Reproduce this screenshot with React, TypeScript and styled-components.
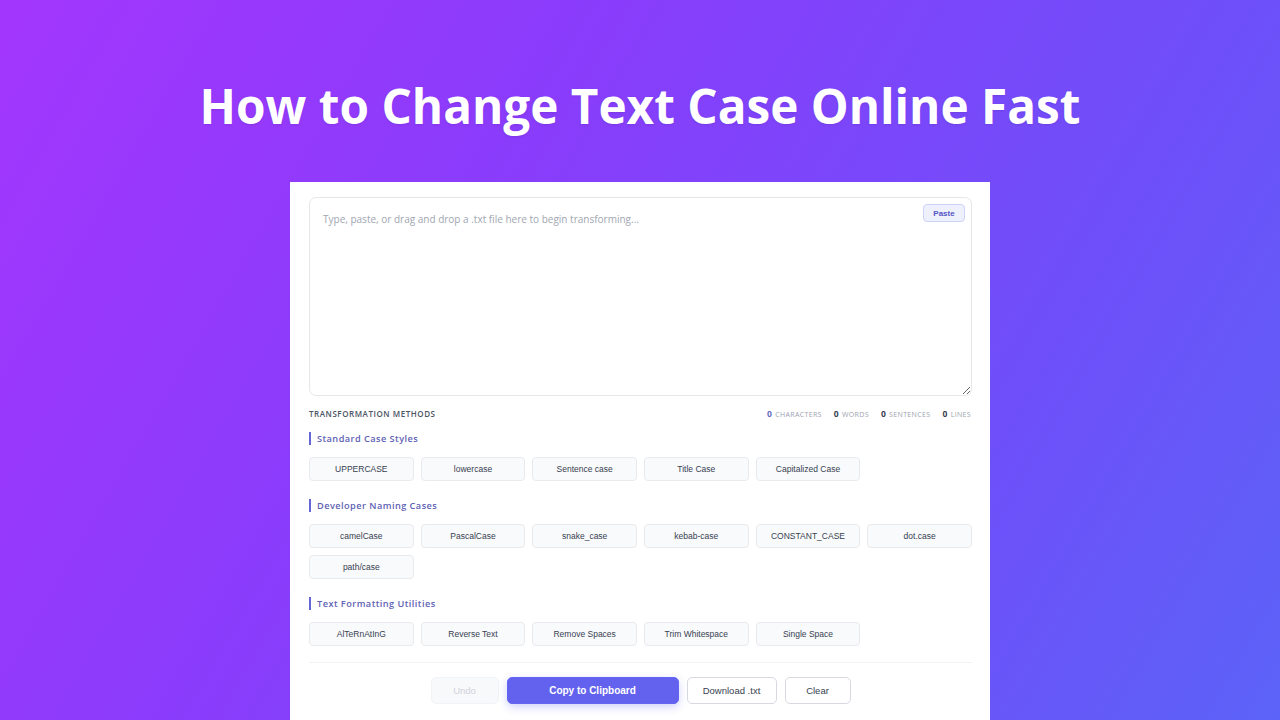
import React from 'react';
import styled, { createGlobalStyle } from 'styled-components';

const GlobalStyle = createGlobalStyle`
  html, body {
    margin: 0;
    padding: 0;
  }
  body {
    width: 1280px;
    height: 720px;
    overflow: hidden;
    font-family: "Open Sans", "Noto Sans", sans-serif;
    background: linear-gradient(120deg, #a336fd 0%, #8a3cfb 35%, #6d50f9 75%, #5c63f8 100%);
  }
`;

const Page = styled.div`
  display: flex;
  flex-direction: column;
  align-items: center;
  height: 720px;
  padding-top: 77px;
  box-sizing: border-box;
`;

const Title = styled.h1`
  margin: 0 0 47px;
  font-family: "Open Sans", sans-serif;
  font-weight: 700;
  font-size: 47.7px;
  line-height: 58px;
  color: #ffffff;
  text-shadow: 0 1px 2px rgba(60, 20, 120, 0.15);
`;

const Card = styled.div`
  width: 700px;
  flex: 1;
  box-sizing: border-box;
  background: #ffffff;
  padding: 15px 18px 0 19px;
`;

const EditorWrap = styled.div`
  position: relative;
`;

const Editor = styled.textarea`
  display: block;
  width: 100%;
  height: 199px;
  box-sizing: border-box;
  border: 1px solid #e5e7eb;
  border-radius: 7px;
  padding: 14px 13px;
  font-family: "Open Sans", sans-serif;
  font-size: 10px;
  color: #374151;
  outline: none;
  resize: vertical;

  &::placeholder {
    color: #a0a6b1;
  }
`;

const PasteButton = styled.button`
  position: absolute;
  top: 7px;
  right: 7px;
  width: 42px;
  height: 18px;
  padding: 0;
  border: 1px solid #cdd3f5;
  border-radius: 4px;
  background: #eef0fd;
  color: #5457c4;
  font-family: "Liberation Sans", Arial, sans-serif;
  font-size: 8px;
  font-weight: 600;
`;

const MetaRow = styled.div`
  display: flex;
  justify-content: space-between;
  align-items: center;
  margin-top: 11px;
  height: 12px;
`;

const MetaLabel = styled.div`
  font-size: 8px;
  font-weight: 600;
  letter-spacing: 0.55px;
  color: #4b5563;
`;

const Stats = styled.div`
  display: flex;
  gap: 12px;
  padding-right: 1px;
`;

const Stat = styled.span`
  font-size: 7px;
  letter-spacing: 0.35px;
  color: #9ca3af;
  text-transform: uppercase;
`;

const StatNum = styled.b<{ $accent?: boolean }>`
  font-size: 8.5px;
  font-weight: 700;
  margin-right: 3px;
  color: ${p => (p.$accent ? '#6669c4' : '#374151')};
`;

const Section = styled.div`
  margin-top: 13px;

  & + & {
    margin-top: 18px;
  }
`;

const SectionTitle = styled.h3`
  margin: 0 0 12px;
  padding-left: 6px;
  border-left: 2px solid #6466d6;
  font-size: 9.2px;
  line-height: 13px;
  font-weight: 600;
  letter-spacing: 0.45px;
  color: #6062b4;
`;

const MethodGrid = styled.div`
  display: grid;
  grid-template-columns: repeat(6, 1fr);
  gap: 7px 7px;
`;

const MethodButton = styled.button`
  height: 24px;
  padding: 0;
  border: 1px solid #e8eaee;
  border-radius: 4px;
  background: #f9fafb;
  color: #374151;
  font-family: "Liberation Sans", Arial, sans-serif;
  font-size: 8.5px;
`;

const Divider = styled.hr`
  margin: 16px 0 14px;
  border: none;
  border-top: 1px solid #f1f2f5;
`;

const Actions = styled.div`
  display: flex;
  justify-content: center;
  gap: 8px;
`;

const ActionButton = styled.button<{ $variant?: 'primary' | 'outline' | 'disabled'; $w: number }>`
  width: ${p => p.$w}px;
  height: 27px;
  padding: 0;
  border-radius: 5px;
  font-family: "Liberation Sans", Arial, sans-serif;
  font-size: ${p => (p.$variant === 'primary' ? 10 : 9.5)}px;
  border: 1px solid
    ${p => (p.$variant === 'primary' ? '#6366f1' : p.$variant === 'disabled' ? '#f1f3f7' : '#d6d9df')};
  background: ${p => (p.$variant === 'primary' ? '#6262ee' : p.$variant === 'disabled' ? '#f8f9fb' : '#ffffff')};
  color: ${p => (p.$variant === 'primary' ? '#ffffff' : p.$variant === 'disabled' ? '#cfd3da' : '#374151')};
  font-weight: ${p => (p.$variant === 'primary' ? 700 : 400)};
  box-shadow: ${p => (p.$variant === 'primary' ? '0 3px 8px rgba(99, 102, 241, 0.3)' : 'none')};
`;

const sections = [
  {
    title: 'Standard Case Styles',
    items: ['UPPERCASE', 'lowercase', 'Sentence case', 'Title Case', 'Capitalized Case'],
  },
  {
    title: 'Developer Naming Cases',
    items: ['camelCase', 'PascalCase', 'snake_case', 'kebab-case', 'CONSTANT_CASE', 'dot.case', 'path/case'],
  },
  {
    title: 'Text Formatting Utilities',
    items: ['AlTeRnAtInG', 'Reverse Text', 'Remove Spaces', 'Trim Whitespace', 'Single Space'],
  },
];

const stats = [
  { label: 'Characters', accent: true },
  { label: 'Words' },
  { label: 'Sentences' },
  { label: 'Lines' },
];

const App: React.FC = () => {
  return (
    <>
      <GlobalStyle />
      <Page>
        <Title>How to Change Text Case Online Fast</Title>
        <Card>
          <EditorWrap>
            <Editor placeholder="Type, paste, or drag and drop a .txt file here to begin transforming..." />
            <PasteButton>Paste</PasteButton>
          </EditorWrap>

          <MetaRow>
            <MetaLabel>TRANSFORMATION METHODS</MetaLabel>
            <Stats>
              {stats.map(s => (
                <Stat key={s.label}>
                  <StatNum $accent={s.accent}>0</StatNum>
                  {s.label}
                </Stat>
              ))}
            </Stats>
          </MetaRow>

          {sections.map(section => (
            <Section key={section.title}>
              <SectionTitle>{section.title}</SectionTitle>
              <MethodGrid>
                {section.items.map(item => (
                  <MethodButton key={item}>{item}</MethodButton>
                ))}
              </MethodGrid>
            </Section>
          ))}

          <Divider />

          <Actions>
            <ActionButton $variant="disabled" $w={68}>Undo</ActionButton>
            <ActionButton $variant="primary" $w={172}>Copy to Clipboard</ActionButton>
            <ActionButton $variant="outline" $w={90}>Download .txt</ActionButton>
            <ActionButton $variant="outline" $w={66}>Clear</ActionButton>
          </Actions>
        </Card>
      </Page>
    </>
  );
};

export default App;
